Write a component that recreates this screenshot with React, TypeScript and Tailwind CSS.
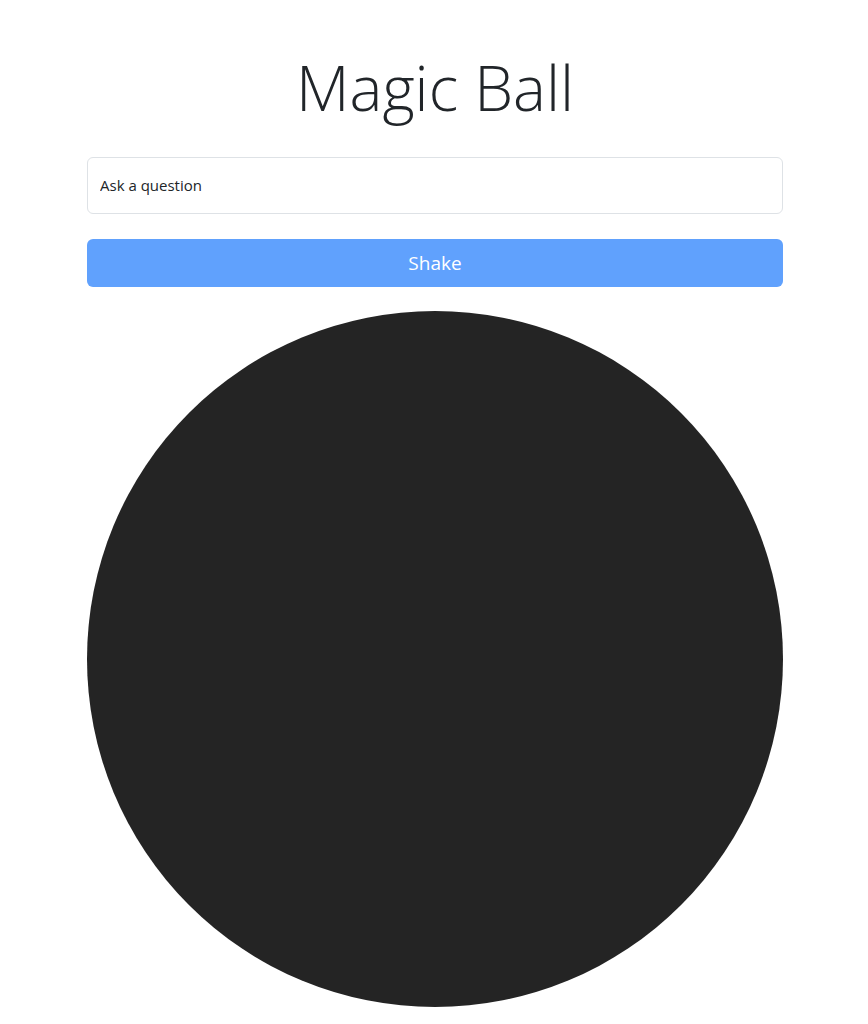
export default function App() {
  return (
    <div className="min-h-screen bg-white font-['Open_Sans',sans-serif] text-[#212529]">
      <div className="ml-[87px] w-[696px] pt-[52px]">
        <h1 className="text-center text-[62px] font-light leading-[1.16]">Magic Ball</h1>
        <input
          type="text"
          placeholder="Ask a question"
          className="mt-[33px] block h-[57px] w-full rounded-[6px] border border-[#dee2e6] px-3 text-[15px] text-[#212529] placeholder:text-[#212529] focus:outline-none"
        />
        <button className="mt-[25px] block h-[48px] w-full rounded-[6px] bg-[#60a1fd] text-[19px] font-medium text-white">
          Shake
        </button>
        <div className="mt-[24px] h-[696px] w-[696px] rounded-full bg-[#242424]" />
      </div>
    </div>
  );
}
